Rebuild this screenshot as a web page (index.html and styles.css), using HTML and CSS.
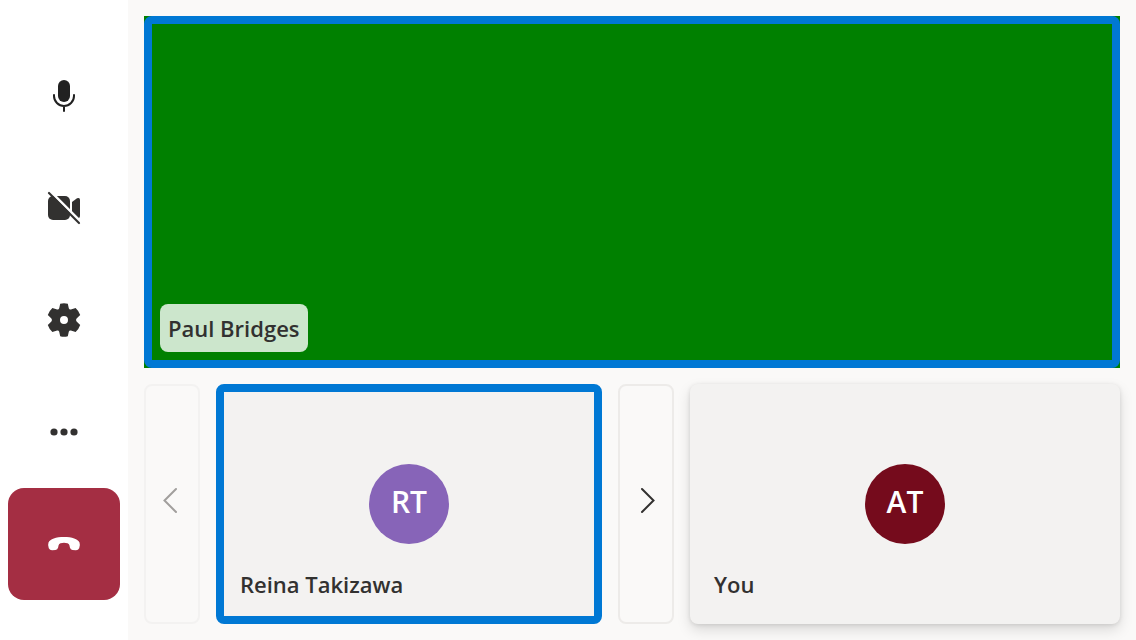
FILE: index.html
```html
<!DOCTYPE html>
<html lang="en">
<head>
<meta charset="utf-8">
<meta name="viewport" content="width=device-width, initial-scale=1">
<title>Call</title>
<link rel="stylesheet" href="styles.css">
</head>
<body>
<div class="call">
  <nav class="controls" aria-label="Call controls">
    <button class="control" type="button" aria-label="Mute">
      <svg class="icon icon-mic" viewBox="0 0 32 32" aria-hidden="true"><rect x="10" y="0" width="12" height="22" rx="6" fill="currentColor"/><path d="M6 15v1a10 10 0 0 0 20 0v-1M16 26v5" fill="none" stroke="currentColor" stroke-width="2" stroke-linecap="round"/></svg>
    </button>
    <button class="control" type="button" aria-label="Turn camera on">
      <svg class="icon" viewBox="0 0 32 32" aria-hidden="true"><rect x="0" y="4" width="22" height="24" rx="5" fill="currentColor"/><path d="M24 10l5-3.700Q32 5 32 8v16Q32 27 29 25.700L24 22z" fill="currentColor"/><path d="M2.500-.5l31 31" stroke="#fff" stroke-width="2.500"/><path d="M1 1l30 30" stroke="currentColor" stroke-width="2.200" stroke-linecap="round"/></svg>
    </button>
    <button class="control" type="button" aria-label="Settings">
      <svg class="icon" viewBox="0 0 32 32" aria-hidden="true"><path fill="currentColor" fill-rule="evenodd" d="M12.200-.3Q16-1.400 19.800-.3L20.800 4.200Q21.300 5.700 22.900 5.400L27.600 4Q30.900 7 32.200 11L28.600 14.400Q27.400 16 28.600 17.600L32.200 21Q30.900 25 27.600 28L22.900 26.600Q21.300 26.300 20.800 27.800L19.800 32.300Q16 33.400 12.200 32.300L11.200 27.800Q10.700 26.300 9.100 26.600L4.400 28Q1.100 25-.2 21L3.400 17.600Q4.600 16 3.400 14.400L-.2 11Q1.100 7 4.400 4L9.100 5.400Q10.700 5.700 11.200 4.200zM16 12a4 4 0 1 0 0 8 4 4 0 0 0 0-8z"/></svg>
    </button>
    <button class="control" type="button" aria-label="More options">
      <svg class="icon" viewBox="0 0 32 32" aria-hidden="true" fill="currentColor"><circle cx="6" cy="16" r="3.600"/><circle cx="16" cy="16" r="3.600"/><circle cx="26" cy="16" r="3.600"/></svg>
    </button>
    <button class="control control-end" type="button" aria-label="Leave call">
      <svg class="icon" viewBox="0 0 32 32" aria-hidden="true"><path fill="currentColor" d="M16 9C8 9 2 11 .5 14.500Q-.5 17.500.8 20.200Q1.800 22.300 4.200 22.200L7.500 21.900Q9.600 21.600 10.100 19.500L10.600 17.200Q11 15.800 12.500 15.300Q16 14.400 19.500 15.300Q21 15.800 21.400 17.200L21.900 19.500Q22.400 21.600 24.500 21.900L27.800 22.200Q30.200 22.300 31.200 20.200Q32.500 17.500 31.500 14.500C30 11 24 9 16 9z"/></svg>
    </button>
  </nav>
  <main class="stage">
    <section class="video" aria-label="Paul Bridges video">
      <div class="video-frame"><span class="name name-badge">Paul Bridges</span></div>
    </section>
    <div class="strip">
      <button class="pager" type="button" aria-label="Previous page" disabled>
        <svg class="icon" viewBox="0 0 32 32" aria-hidden="true"><path d="M20 1L8.500 12.500 20 24" class="chevron"/></svg>
      </button>
      <section class="tile tile-speaking">
        <div class="avatar avatar-purple">RT</div>
        <span class="name">Reina Takizawa</span>
      </section>
      <button class="pager" type="button" aria-label="Next page">
        <svg class="icon" viewBox="0 0 32 32" aria-hidden="true"><path d="M12 1l11.500 11.500L12 24" class="chevron"/></svg>
      </button>
      <section class="tile tile-self">
        <div class="avatar avatar-red">AT</div>
        <span class="name">You</span>
      </section>
    </div>
  </main>
</div>
</body>
</html>
```
FILE: styles.css
```css
* {
  box-sizing: border-box;
}

body {
  margin: 0;
  color: #323130;
  background: #faf9f8;
  font-family: "Open Sans", "Noto Sans", sans-serif;
}

button {
  margin: 0;
  padding: 0;
  color: inherit;
  font: inherit;
}

.call {
  display: flex;
  min-height: 100vh;
}

.controls {
  display: flex;
  flex: none;
  flex-direction: column;
  justify-content: center;
  padding: 8px;
  background: #fff;
}

.control {
  display: grid;
  place-items: center;
  width: 112px;
  height: 112px;
  border: 0;
  border-radius: 16px;
  background: transparent;
}

.control-end {
  color: #fff;
  background: #a42e43;
}

.icon {
  display: block;
  width: 32px;
  height: 32px;
  overflow: visible;
}

.icon-mic {
  color: #212121;
}

.stage {
  display: flex;
  flex: 1;
  flex-direction: column;
  gap: 16px;
  min-width: 0;
  padding: 16px;
}

.video {
  display: flex;
  flex: 1;
  background: #008000;
}

.video-frame {
  display: flex;
  flex: 1;
  align-items: flex-end;
  padding: 8px;
  border: 8px solid #0078d4;
  border-radius: 8px;
}

.name {
  font-size: 22px;
  font-weight: 600;
  line-height: 32px;
  white-space: nowrap;
}

.name-badge {
  padding: 8px;
  border-radius: 8px;
  background: rgba(255, 255, 255, 0.8);
}

.strip {
  display: grid;
  grid-template-columns: 56px 386fr 56px 430fr;
  gap: 16px;
  height: 240px;
}

.pager {
  display: grid;
  place-items: center;
  border: 2px solid #edebe9;
  border-radius: 8px;
  background: transparent;
}

.pager:disabled {
  color: #a19f9d;
  border-color: #f3f2f1;
}

.chevron {
  fill: none;
  stroke: currentColor;
  stroke-linecap: round;
  stroke-width: 2;
}

.tile {
  display: grid;
  grid-template-rows: 1fr 80px 80px;
  padding: 0 24px;
  border-radius: 8px;
  background: #f3f2f1;
}

.tile-speaking {
  grid-template-rows: 1fr 80px 72px;
  padding: 0 16px;
  border: 8px solid #0078d4;
}

.tile-self {
  box-shadow: 0 6px 14px rgba(0, 0, 0, 0.13), 0 1px 4px rgba(0, 0, 0, 0.11);
}

.avatar {
  grid-row: 2;
  justify-self: center;
  width: 80px;
  height: 80px;
  border-radius: 50%;
  color: #fff;
  font-size: 30px;
  font-weight: 600;
  line-height: 76px;
  text-align: center;
}

.avatar-purple {
  background: #8764b8;
}

.avatar-red {
  background: #750b1c;
}

.tile .name {
  grid-row: 3;
  align-self: start;
  padding-top: 24px;
}
```
